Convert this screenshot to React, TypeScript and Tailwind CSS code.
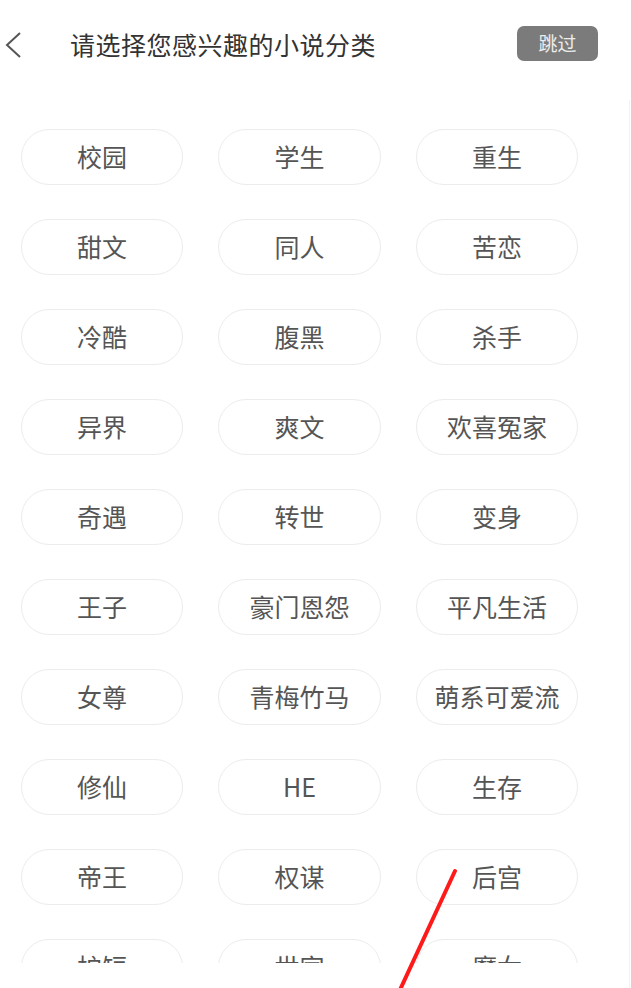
import React from "react";

const tags = [
  "校园", "学生", "重生",
  "甜文", "同人", "苦恋",
  "冷酷", "腹黑", "杀手",
  "异界", "爽文", "欢喜冤家",
  "奇遇", "转世", "变身",
  "王子", "豪门恩怨", "平凡生活",
  "女尊", "青梅竹马", "萌系可爱流",
  "修仙", "HE", "生存",
  "帝王", "权谋", "后宫",
  "护短", "世家", "魔女",
];

export default function App() {
  return (
    <div
      className="relative w-[631px] h-[988px] bg-white overflow-hidden"
      style={{ fontFamily: '"Noto Sans CJK SC", "Noto Sans", sans-serif' }}
    >
      <div className="relative h-[88px] flex items-center">
        <svg className="absolute left-[4px] top-[31px]" width="20" height="28" viewBox="0 0 20 28">
          <polyline points="16,2 3,14 16,26" fill="none" stroke="#555" strokeWidth="2" />
        </svg>
        <div className="ml-[70px] text-[25px] leading-none text-[#333] tracking-[0.5px]">
          请选择您感兴趣的小说分类
        </div>
        <div className="ml-auto mr-[33px] w-[81px] h-[35px] mt-[-1px] rounded-[7px] bg-[#7b7b7b] flex items-center justify-center text-[19px] text-[#ececec]">
          跳过
        </div>
      </div>
      <div className="h-[875px] overflow-hidden">
        <div className="pt-[41px] pl-[21px] grid grid-cols-[162px_163px_162px] gap-x-[35px] gap-y-[34px]">
          {tags.map((t) => (
            <div
              key={t}
              className="h-[56px] rounded-full border-[1.5px] border-[#ececec] flex items-center justify-center text-[25px] text-[#555]"
            >
              {t}
            </div>
          ))}
        </div>
      </div>
      <div className="absolute right-[1px] top-[100px] w-[1px] h-[888px] bg-[#eef4f6]" />
      <svg className="absolute left-0 top-0 pointer-events-none" width="631" height="988" viewBox="0 0 631 988">
        <line x1="455" y1="871" x2="399" y2="992" stroke="#ff1a1a" strokeWidth="4" strokeLinecap="round" />
      </svg>
    </div>
  );
}
